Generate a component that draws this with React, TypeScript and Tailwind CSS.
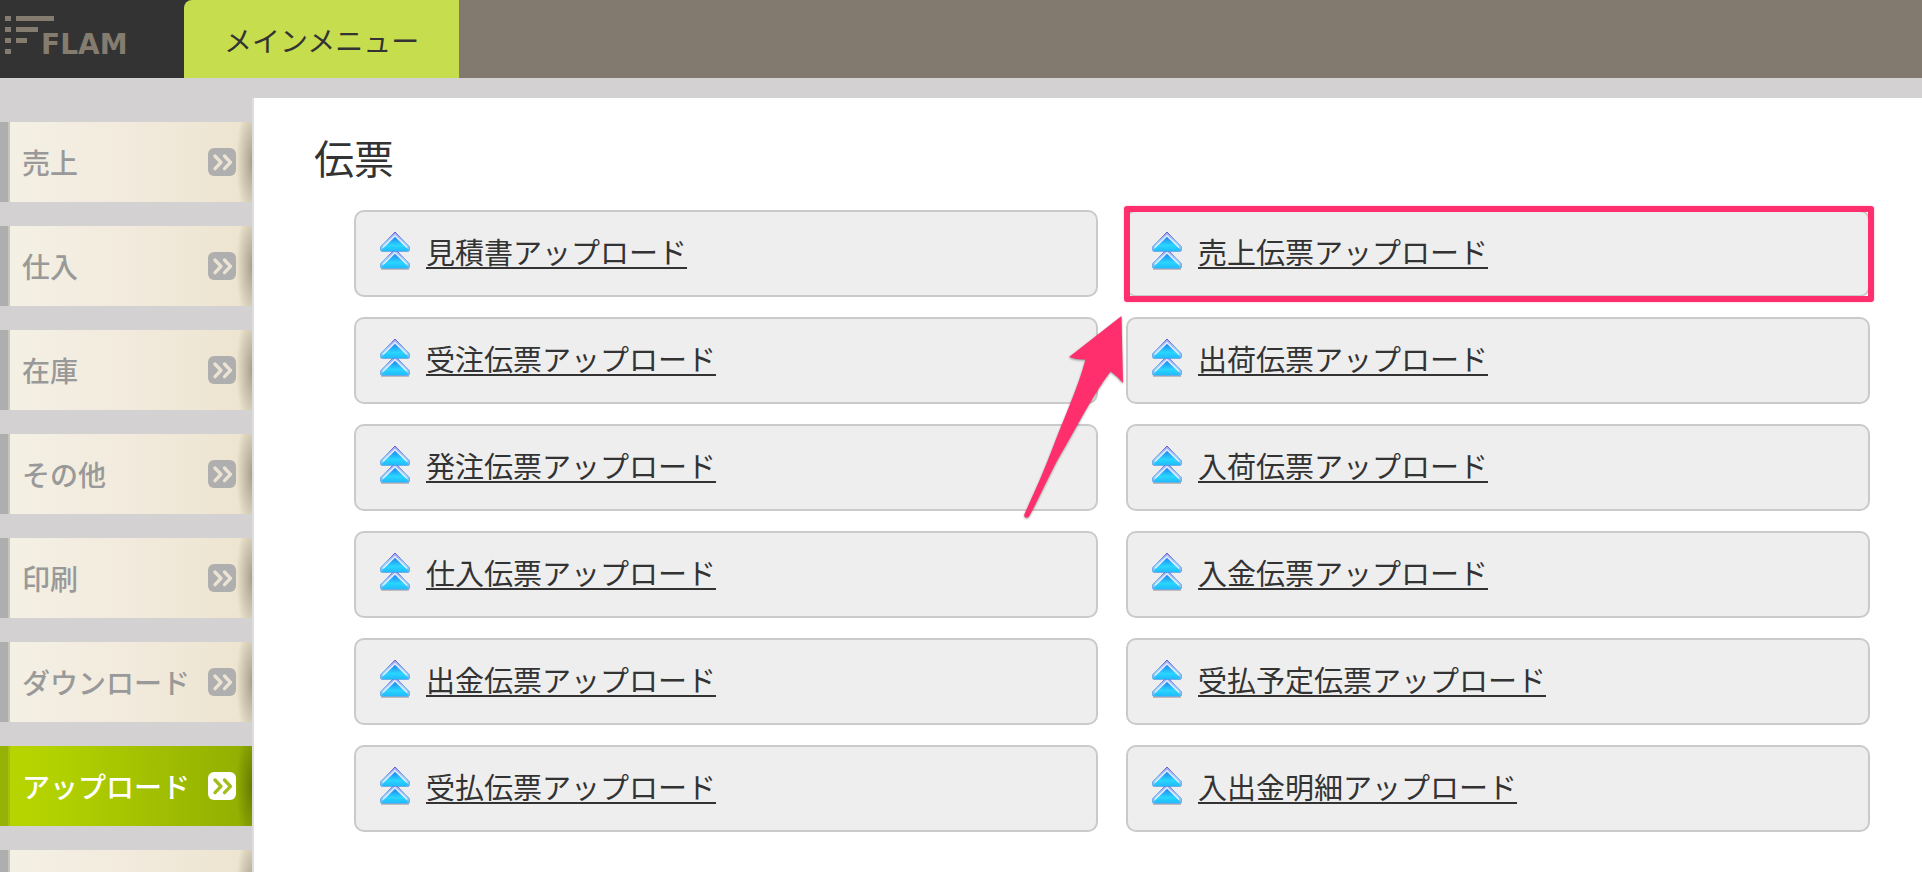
import clsx from "clsx"

const menuItems = [
  { label: "売上", href: "#sales" },
  { label: "仕入", href: "#purchase" },
  { label: "在庫", href: "#stock" },
  { label: "その他", href: "#others" },
  { label: "印刷", href: "#print" },
  { label: "ダウンロード", href: "#download" },
  { label: "アップロード", href: "#upload", active: true },
  { label: "", href: "#more" },
]

const uploads = [
  { label: "見積書アップロード", href: "#estimate" },
  { label: "売上伝票アップロード", href: "#sales-slip", marked: true },
  { label: "受注伝票アップロード", href: "#order-slip" },
  { label: "出荷伝票アップロード", href: "#shipping-slip" },
  { label: "発注伝票アップロード", href: "#purchase-order" },
  { label: "入荷伝票アップロード", href: "#arrival-slip" },
  { label: "仕入伝票アップロード", href: "#purchase-slip" },
  { label: "入金伝票アップロード", href: "#receipt-slip" },
  { label: "出金伝票アップロード", href: "#payment-slip" },
  { label: "受払予定伝票アップロード", href: "#transfer-plan" },
  { label: "受払伝票アップロード", href: "#transfer-slip" },
  { label: "入出金明細アップロード", href: "#cash-detail" },
]

function Logo() {
  return (
    <svg width="184" height="78" viewBox="0 0 184 78" fill="#857c70" role="img" aria-label="FLAM">
      <rect x="5" y="16" width="6" height="5" />
      <rect x="16" y="16" width="38" height="5" />
      <rect x="5" y="27" width="6" height="5" />
      <rect x="16" y="27" width="22" height="5" />
      <rect x="5" y="38" width="6" height="5" />
      <rect x="16" y="38" width="11" height="5" />
      <rect x="5" y="49" width="6" height="5" />
      <text x="41" y="54" fontSize="28" fontWeight="700" fontFamily="'DejaVu Sans', sans-serif">
        FLAM
      </text>
    </svg>
  )
}

function MenuArrow({ active }: { active?: boolean }) {
  return (
    <svg width="28" height="28" viewBox="0 0 28 28" fill="none" aria-hidden="true">
      <rect width="28" height="28" rx="6" fill={active ? "#ffffff" : "#afafaf"} />
      <path
        d="M7 8l6 6.3-6 6.3M16.5 8l6 6.3-6 6.3"
        stroke={active ? "#a3bd1c" : "#ebe3d3"}
        strokeWidth="3.4"
        strokeLinecap="round"
        strokeLinejoin="round"
      />
    </svg>
  )
}

function UploadIcon() {
  return (
    <svg width="30" height="40" viewBox="0 0 30 40" className="mb-2 shrink-0" aria-hidden="true">
      <defs>
        <linearGradient id="edge" x1="0" y1="0" x2="0" y2="1">
          <stop offset="0" stopColor="#4a3fc0" />
          <stop offset="0.5" stopColor="#5b93e8" />
          <stop offset="1" stopColor="#3f8fdc" />
        </linearGradient>
        <linearGradient id="band" x1="0" y1="0" x2="0" y2="1">
          <stop offset="0" stopColor="#a7a4f2" />
          <stop offset="0.6" stopColor="#a5d4fb" />
          <stop offset="1" stopColor="#6cc4fb" />
        </linearGradient>
        <linearGradient id="core" x1="0" y1="0" x2="0" y2="1">
          <stop offset="0" stopColor="#1e86f2" />
          <stop offset="0.6" stopColor="#2ad6ff" />
          <stop offset="1" stopColor="#20bcfc" />
        </linearGradient>
      </defs>
      <path d="M1 39.3h28" stroke="#b5b0ac" />
      {["translate(0 17)", "translate(0 0)"].map((transform) => (
        <g key={transform} transform={transform}>
          <path
            d="M15 2L29.3 16.6V20.2Q29.3 21.3 28 21.3H2Q.7 21.3 .7 20.2V16.6Z"
            fill="url(#band)"
            stroke="url(#edge)"
            strokeWidth="0.8"
            strokeLinejoin="round"
          />
          <path d="M3 17.5L15 5.5 27 17.5" fill="none" stroke="#e3f1ff" strokeWidth="1.2" />
          <path d="M15 7L28 19.6Q28 20.9 26.8 20.9H3.2Q2 20.9 2 19.6Z" fill="url(#core)" />
        </g>
      ))}
    </svg>
  )
}

// Frame and arrow pointing out the card to click
function Marker() {
  return (
    <>
      <span className="pointer-events-none absolute -top-1 -right-1 -bottom-[5px] -left-0.5 z-10 rounded-[3px] border-6 border-[#ff2e6d] shadow-[0_0_2px_rgba(255,46,109,0.4)]" />
      <svg
        width="106"
        height="212"
        viewBox="0 0 106 212"
        className="pointer-events-none absolute top-[100px] -left-[106px] z-10 drop-shadow-[0_1px_1px_rgba(0,0,0,0.4)]"
        aria-hidden="true"
      >
        <path
          d="M101.5 6L49 47Q57 50 65.5 49.5C58 78 43 110 33 137C24 161 14 183 4.3 204.5C3.5 207.5 7.5 209 9.3 206C18 190 28 168 38 149C57 117 73 84 90.5 61.5Q97 66 103 73Z"
          fill="#ff2e6d"
        />
      </svg>
    </>
  )
}

export default function App() {
  return (
    <div className="flex h-screen flex-col overflow-hidden bg-[#d3d1d2] font-['Liberation_Sans','Noto_Sans_CJK_JP',sans-serif] text-[#333]">
      <header className="flex h-[78px] shrink-0 bg-[#837a6f]">
        <div className="flex bg-[#333]">
          <a href="#top">
            <Logo />
          </a>
          <a
            href="#main-menu"
            className="flex items-center rounded-tl-lg bg-[#c6dd4e] px-10 pt-2 text-[28px] leading-10"
          >
            メインメニュー
          </a>
        </div>
      </header>

      <div className="flex min-h-0 flex-1">
        <nav className="w-[252px] shrink-0 pt-11">
          <ul className="flex flex-col gap-6">
            {menuItems.map((item) => (
              <li key={item.href}>
                <a
                  href={item.href}
                  aria-label={item.label || "その他のメニュー"}
                  className={clsx(
                    "flex h-20 items-center justify-between border-l-8 pr-4 pl-3.5 text-[28px] leading-10 font-medium",
                    item.active
                      ? "border-[#96b206] bg-[radial-gradient(16px_60px_at_right,rgba(60,70,0,0.5),transparent),linear-gradient(to_right,#a5c010_2px,#b6d500_2px,#b2d100_20%,#91ad02)] text-white"
                      : "border-[#aeaeae] bg-[radial-gradient(16px_60px_at_right,rgba(100,90,70,0.5),transparent),linear-gradient(to_right,#c6c4bf_2px,#f4f0e4_2px,#f2ebde_45%,#ede4cf)] text-[#999]"
                  )}
                >
                  <span className="pt-1.5">{item.label}</span>
                  <MenuArrow active={item.active} />
                </a>
              </li>
            ))}
          </ul>
        </nav>

        <main className="mt-5 flex-1 border-l-2 border-[#dedede] bg-white pt-8 pr-[52px] pl-[60px]">
          <h1 className="text-[40px] leading-[60px]">伝票</h1>
          <ul className="mt-5 ml-10 grid grid-cols-2 gap-x-7 gap-y-5">
            {uploads.map((upload) => (
              <li key={upload.href} className="relative">
                <div className="flex h-[87px] items-center gap-4 rounded-[10px] border-2 border-[#cacaca] bg-[#eee] pl-6">
                  <UploadIcon />
                  <a
                    href={upload.href}
                    className="text-[29px] leading-10 underline decoration-2 underline-offset-[3px] [text-decoration-skip-ink:none]"
                  >
                    {upload.label}
                  </a>
                </div>
                {upload.marked && <Marker />}
              </li>
            ))}
          </ul>
        </main>
      </div>
    </div>
  )
}
